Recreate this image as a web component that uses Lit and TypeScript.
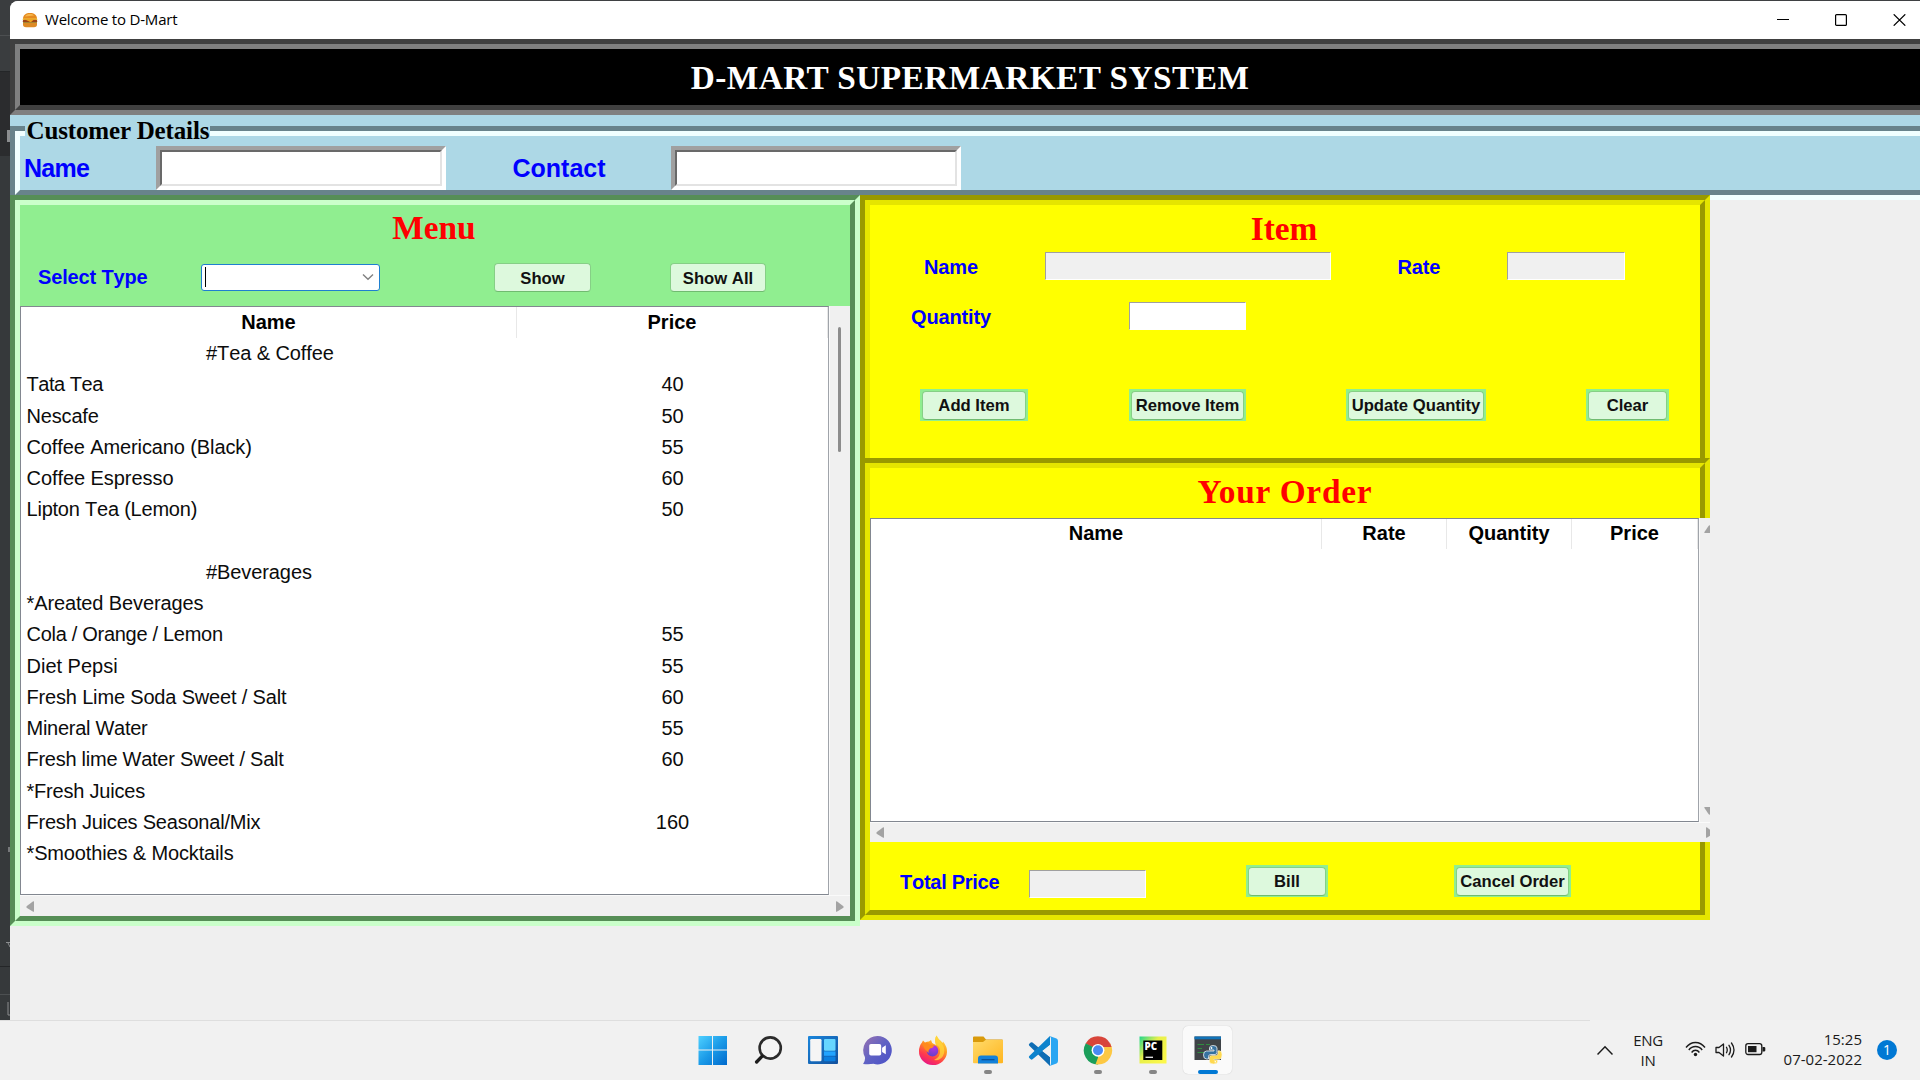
import { LitElement, html, svg, css } from "lit";
import { customElement } from "lit/decorators.js";

type Row = { name: string; price?: string; heading?: boolean; track?: number };

const MENU: Row[] = [
  { name: "#Tea & Coffee", heading: true },
  { name: "Tata Tea", price: "40", track: -0.45 },
  { name: "Nescafe", price: "50", track: -0.17 },
  { name: "Coffee Americano (Black)", price: "55", track: -0.11 },
  { name: "Coffee Espresso", price: "60", track: -0.06 },
  { name: "Lipton Tea (Lemon)", price: "50", track: -0.22 },
  { name: "" },
  { name: "#Beverages", heading: true },
  { name: "*Areated Beverages", track: -0.12 },
  { name: "Cola / Orange / Lemon", price: "55", track: -0.29 },
  { name: "Diet Pepsi", price: "55", track: 0 },
  { name: "Fresh Lime Soda Sweet / Salt", price: "60", track: -0.17 },
  { name: "Mineral Water", price: "55", track: -0.27 },
  { name: "Fresh lime Water Sweet / Salt", price: "60", track: -0.26 },
  { name: "*Fresh Juices", track: -0.2 },
  { name: "Fresh Juices Seasonal/Mix", price: "160", track: -0.21 },
  { name: "*Smoothies & Mocktails", track: -0.14 },
];

const arrow = (dir: "left" | "right" | "up" | "down") => {
  const d = {
    left: "M8 .8V10.2Q8 11 7.2 10.7L1 7Q-.2 6 .9 5L7.2.3Q8 0 8 .8Z",
    right: "M0 .8V10.2Q0 11 .8 10.7L7 7Q8.2 6 7.1 5L.8.3Q0 0 0 .8Z",
    up: "M.8 8H10.2Q11 8 10.7 7.2L6.5.9Q5.5-.2 4.5.9L.3 7.2Q0 8 .8 8Z",
    down: "M.8 0H10.2Q11 0 10.7.8L6.5 7.1Q5.5 8.2 4.5 7.1L.3.8Q0 0 .8 0Z",
  }[dir];
  const flat = dir === "up" || dir === "down";
  return html`<svg class="arrow" width=${flat ? 11 : 8} height=${flat ? 8 : 11}><path d=${d} fill="#a3a3a3" /></svg>`;
};

const burger = html`<svg width="16" height="16" viewBox="0 0 16 16">
  <path d="M1 7C1 2.8 4 1 8 1s7 1.8 7 6z" fill="#e58a1f" />
  <path d="M3 4.5C4 2.4 6 2 8 2s3 .3 4 1.4z" fill="#f7b64c" />
  <rect x=".6" y="6.6" width="14.8" height="1.6" rx=".8" fill="#f5c33b" />
  <rect x=".8" y="7.8" width="14.4" height="3" rx="1.2" fill="#9c4216" />
  <path d="M3 7.6h9l-3.2 2.6z" fill="#f3a51e" /><rect x="1" y="10.2" width="14" height="1" fill="#a08a2c" />
  <path d="M1 11h14v1.5q0 2.8-3 2.8H4q-3 0-3-2.8z" fill="#dd8a25" />
</svg>`;

const icons = {
  windows: svg`<defs><linearGradient id="w" x1="0" y1="0" x2="1" y2="1"><stop offset="0" stop-color="#4fd0ff"/><stop offset=".5" stop-color="#1b9be8"/><stop offset="1" stop-color="#0069cc"/></linearGradient></defs>
    <path fill="url(#w)" d="M1.500 1H15V14.500H1.500zM16 1H30V14.500H16zM1.500 15.500H15V30H1.500zM16 15.500H30V30H16z"/>`,
  search: svg`<circle cx="18.200" cy="13" r="10.600" fill="#f4f4f4" stroke="#2b2b2b" stroke-width="2.600"/><path d="M10.200 21.200 4.600 27" stroke="#1d1d1d" stroke-width="3.300" stroke-linecap="round"/>`,
  widgets: svg`<defs><linearGradient id="wb" x1="0" y1="0" x2="1" y2="1"><stop offset="0" stop-color="#1a86dc"/><stop offset="1" stop-color="#12509c"/></linearGradient></defs>
    <rect x="1" y="1" width="30" height="28" rx="1" fill="url(#wb)"/><rect x="3.200" y="4" width="11.300" height="22.200" rx="1.200" fill="#f5f5f5"/><rect x="17" y="4" width="11.500" height="11.800" rx="1" fill="#67d6ff"/><rect x="17" y="16.400" width="11.500" height="4.400" fill="#22a4ff"/><rect x="17" y="21.400" width="11.500" height="4.800" rx="1" fill="#0b7fe0"/>`,
  chat: svg`<defs><linearGradient id="ch" x1="0" y1="0" x2="1" y2="1"><stop offset="0" stop-color="#9a72b0"/><stop offset=".5" stop-color="#5f62c4"/><stop offset="1" stop-color="#4a50c8"/></linearGradient></defs>
    <path fill="url(#ch)" d="M15.500 1a14.200 14.200 0 1 1-4 27.800Q7.500 29.500 1.100 29 3.500 26 2.900 22A14.200 14.200 0 0 1 15.500 1z"/><rect x="7.200" y="9" width="12" height="11.600" rx="1.800" fill="#fff"/><path d="M20.100 12.800 23.800 10.300v9L20.100 17z" fill="#fff"/>`,
  firefox: svg`<defs><linearGradient id="ff" x1=".8" y1="0" x2=".3" y2="1"><stop offset="0" stop-color="#ffe94a"/><stop offset=".4" stop-color="#ff9a1f"/><stop offset=".75" stop-color="#ff3a4d"/><stop offset="1" stop-color="#e61587"/></linearGradient><radialGradient id="fp" cx=".6" cy=".2" r=".9"><stop offset="0" stop-color="#b833e1"/><stop offset="1" stop-color="#5b42c8"/></radialGradient></defs>
    <path fill="url(#ff)" d="M5 7.500 6 5.500 8 7.500Q10 6.500 12 6.500L14 5Q14.500 8 17 9L19 10Q17 4 19.500.500 21 4 24 6L25.500 8 26 6.500Q30.500 12 30 17A14 13.500 0 0 1 2 16Q2 11 5 7.500z"/><path fill="#ffd83b" d="M19.500.500Q22 5 25.500 9.500 29 15 26 21 23 26 17 25 24 22 23 15 22.500 11 19 10 17 4 19.500.500z" opacity=".75"/><circle cx="15.500" cy="15.700" r="5.800" fill="url(#fp)"/><path fill="#ff8a1e" d="M5 9Q9 7 13 9.500L17.500 10.500Q16 13 13 13.500 11 15 11.500 18 7 14 5 9z"/>`,
  folder: svg`<defs><linearGradient id="fo" x1="0" y1="0" x2="1" y2="1"><stop offset="0" stop-color="#ffdb6b"/><stop offset="1" stop-color="#ffb51f"/></linearGradient></defs>
    <path d="M1 2.500Q1 1.500 2 1.500H11.500L14 4.500H30Q31 4.500 31 5.500V10H1z" fill="#d99a0b"/><path d="M1 7H11L13.500 5H31V27.300Q31 28.300 30 28.300H2Q1 28.300 1 27.300z" fill="url(#fo)"/><path d="M6 28.500V23.500Q6 20.500 9 20.500H23Q26 20.500 26 23.500V28.500z" fill="#1381da"/><path d="M9.500 24.700H22.500" stroke="#0a4f94" stroke-width="1.200"/>`,
  code: svg`<path d="M23 .800V31L2.300 10.800Q1.300 9.800 2.300 8.800L3.700 7.600Q4.600 7 5.500 7.600L23 22z" fill="#0f6db4"/><path d="M23 31V1L2.300 21Q1.300 22 2.300 23L3.700 24.300Q4.600 25 5.500 24.300L23 10z" fill="#0d83cd"/><path d="M22.500 1 29.500 3.500Q31 4.200 31 6V26Q31 27.800 29.500 28.500L22.500 31Q24 30 24 28V3.500Q24 2 22.500 1z" fill="#2aa6f2"/><path d="M23 10V22L15.300 16z" fill="#f1f1f1"/>`,
  chrome: svg`<path d="M16 15.500 3.600 8.500A14 14 0 0 1 28.200 8.500z" fill="#d8453a"/><path d="M16 15.500 28.200 8.500A14 14 0 0 1 16 29.500z" fill="#fdc843"/><path d="M16 15.500 16 29.500A14 14 0 0 1 3.700 8.500z" fill="#1b9e5a"/><path d="M16 8.500H28.200L29.500 12H20z" fill="#d8453a"/><path d="M21.800 18.700 16 29.500 13.500 29.200 17 20z" fill="#fdc843"/><path d="M3.700 8.500 10 19 11 12z" fill="#1b9e5a"/><circle cx="16" cy="15.300" r="6.400" fill="#fff"/><circle cx="16" cy="15.300" r="5" fill="#4a8af4"/>`,
  pycharm: svg`<defs><linearGradient id="pc" x1="0" y1="0" x2="1" y2=".8"><stop offset="0" stop-color="#1fd68d"/><stop offset=".45" stop-color="#e8f04a"/><stop offset="1" stop-color="#fcf84a"/></linearGradient></defs>
    <path fill="url(#pc)" d="M2.500 1.500H29.500V28.500H2.500z"/><rect x="6.300" y="5.500" width="19" height="19.500" fill="#000"/><text x="7.500" y="14.800" font-family="Open Sans, sans-serif" font-weight="800" font-size="9.800" fill="#fff">PC</text><path d="M8.500 22.300H16" stroke="#ddd" stroke-width="1.400"/>`,
  python: svg`<rect x="2.500" y="1.500" width="26.500" height="23.500" fill="#3f4347"/><rect x="2.500" y="1.500" width="26.500" height="2.800" fill="#1273b8"/><path d="M5.500 9.500H12M14 9.500H18M5.500 13.500H10M5.500 17.500H12" stroke="#2f8d3f" stroke-width="1.200"/>
    <path d="M21 10.500Q17.500 10.500 17.500 13V15H22V16H14.500Q11.500 16 11.500 20T14.500 24H16.500V21.500Q16.500 19.500 19 19.500H23Q25 19.500 25 17.500V13Q25 10.500 21 10.500z" fill="#37719f" stroke="#eef3f6" stroke-width=".8"/><path d="M21.500 29Q17.500 29 17.500 26.500V22.500Q17.500 20.500 19.500 20.500H23.500Q26 20.500 26 18V15.800H27.500Q30 15.800 30 19.800T27.500 24.300H22V25H25.500V26.500Q25.500 29 21.500 29z" fill="#ffd94f" stroke="#fbf6e0" stroke-width=".6"/><circle cx="19.500" cy="13" r=".9" fill="#fff"/><circle cx="23.300" cy="26.700" r=".8" fill="#fff"/>`,
};

const TASKS: { icon: keyof typeof icons; state: string }[] = [
  { icon: "windows", state: "" },
  { icon: "search", state: "" },
  { icon: "widgets", state: "" },
  { icon: "chat", state: "" },
  { icon: "firefox", state: "" },
  { icon: "folder", state: "open" },
  { icon: "code", state: "" },
  { icon: "chrome", state: "open" },
  { icon: "pycharm", state: "open" },
  { icon: "python", state: "active" },
];

@customElement("app-root")
export class AppRoot extends LitElement {
  static styles = css`
    :host { display: block; width: 1920px; height: 1080px; overflow: hidden; font-family: "Liberation Sans", Arial, sans-serif; font-kerning: none; color: #000; }
    * { box-sizing: border-box; }
    svg { display: block; }
    .desktop { display: flex; flex-direction: column; width: 1920px; height: 1080px; }
    .upper { display: flex; height: 1020px; background: #3f4143; }
    .behind { width: 10px; flex: none; }
    .window { flex: 1; min-width: 0; margin-top: 1px; background: #efefef; border-top-left-radius: 8px; overflow: hidden; display: flex; flex-direction: column; }

    .titlebar { height: 38px; flex: none; background: #fff; display: flex; align-items: center; padding: 0 14px 0 12px; font: 15px/20px "Open Sans", "Noto Sans", sans-serif; }
    .titlebar .caption { margin: -3px auto 0 7px; letter-spacing: -.2px; }
    .controls { display: flex; gap: 46px; }

    .outer { border: 5px solid; }
    .inner { border: 5px solid; height: 100%; }
    .outer.black { border-color: #404040 #808080 #808080 #404040; }
    .outer.black > .inner { border-color: #808080 #404040 #404040 #808080; background: #000; }
    .outer.blue { border-color: #68838b #f0ffff #f0ffff #68838b; }
    .outer.blue > .inner { border-color: #f0ffff #68838b #68838b #f0ffff; }
    .outer.green { border-color: #568e56 #caffca #caffca #568e56; }
    .outer.green > .inner { border-color: #caffca #568e56 #568e56 #caffca; background: #90ee90; }
    .outer.yellow { border-color: #999900 #e5e500 #e5e500 #999900; }
    .outer.yellow > .inner { border-color: #e5e500 #999900 #999900 #e5e500; background: #ff0; }

    .heading { font: bold 33.33px/46px "Liberation Serif", "Times New Roman", serif; color: #f00; text-align: center; }
    .banner { width: 1920px; height: 76px; flex: none; }
    .banner .heading { color: #fff; line-height: 58px; height: 56px; letter-spacing: .44px; }

    .customer { width: 1920px; height: 85px; flex: none; background: #add8e6; padding-top: 11px; }
    .customer .outer { height: 74px; }
    .customer .inner { display: flex; flex-direction: column; }
    .legend { align-self: flex-start; margin: -16px 0 0 5px; width: 185px; padding-left: 1.5px; height: 22px; background: #add8e6; font: bold 25px/22px "Liberation Serif", "Times New Roman", serif; white-space: nowrap; letter-spacing: -.13px; }
    .fields { display: flex; margin-top: 4px; height: 44px; }
    .blabel { font-weight: bold; font-size: 25px; line-height: 45px; color: #00f; padding-left: 4px; }
    .blabel.a { width: 136px; letter-spacing: -.7px; }
    .blabel.b { width: 225px; padding-left: 66.500px; }
    .sunken { width: 290px; border: 4px solid; border-color: #a0a0a0 #fff #fff #a0a0a0; }
    .sunken i { display: block; height: 100%; background: #fff; border: 2px solid; border-color: #696969 #e3e3e3 #e3e3e3 #696969; }

    .panels { display: flex; margin-top: -5px; align-items: flex-start; }
    .menu { width: 850px; height: 731px; flex: none; }
    .side { width: 850px; flex: none; }
    .item { height: 273px; }
    .order { height: 462px; margin-top: -10px; }
    .label { font-weight: bold; font-size: 20px; line-height: 28px; color: #00f; white-space: nowrap; letter-spacing: -.15px; }

    .menu .heading { height: 45px; padding-right: 2px; }
    .picker { display: grid; grid-template-columns: 164px 179px 112px 101px 75px 100px; padding: 0 0 2px 17px; height: 56px; align-items: center; }
    .picker .label { padding-left: 1px; }
    .picker .btn b { line-height: 29px; }
    .combo { height: 27px; border: 1.5px solid #1f7fd0; border-radius: 3px; background: #fff; display: flex; align-items: center; justify-content: space-between; padding: 0 5px 0 3px; }
    .caret { width: 1px; height: 20px; background: #000; }
    .btn { height: 32px; background: #90ee90; padding: 2px 2px 1px; }
    .btn b { display: block; height: 29px; border: 1px solid #86cf86; border-bottom-color: #70bb70; border-radius: 4px; background: #ddf9dd; color: #111; font-size: 16.67px; line-height: 28px; text-align: center; white-space: nowrap; }
    .c4 { grid-column: 4; } .c6 { grid-column: 6; }

    .view { display: grid; }
    .menu .view { grid-template: 589px 21px / 809px 21px; }
    .tree { background: #fff; border: 1px solid #828790; border-right-color: #a0a4aa; overflow: hidden; }
    .thead { display: grid; font-weight: bold; font-size: 20px; line-height: 31px; height: 31px; text-align: center; }
    .menu .thead, .trow { grid-template-columns: 496px 1fr; }
    .thead span { border-right: 1px solid #e8e8e8; }
    .trow { display: grid; height: 31.250px; line-height: 31.250px; font-size: 20px; color: #0c0c0c; white-space: pre; }
    .trow .n { padding-left: 5.500px; letter-spacing: -.09px; }
    .trow .n.heading-row { padding-left: 185px; }
    .trow .p { text-align: center; }
    .vbar, .hbar { background: #f0f0f0; display: flex; border: 0 solid #fafafa; }
    .vbar { flex-direction: column; border-left-width: 1px; }
    .hbar { grid-column: 1 / -1; align-items: center; justify-content: space-between; border-top-width: 1px; }
    .menu .hbar { padding: 0 6px; }
    .thumb { width: 3px; height: 125px; margin: 21px 0 0 8px; background: #8c8c8c; border-radius: 1.500px; }

    .item .heading { height: 47px; line-height: 48px; padding-right: 2px; }
    .line { display: flex; height: 28px; }
    .line .label { padding-top: 1px; }
    .entry { height: 28px; border: 1px solid; border-color: #a0a0a0 #fff #fff #a0a0a0; background: #f0f0f0; }
    .entry.on { background: #fff; }
    .name-l { width: 175px; padding-left: 54px; } .name-e { width: 286px; }
    .rate-l { width: 176px; padding-left: 66.500px; } .rate-e { width: 118px; }
    .line.qty { margin-top: 22px; }
    .qty-l { width: 259px; padding-left: 41px; } .qty-e { width: 117px; }
    .actions { display: flex; margin-top: 59px; padding-left: 50px; }
    .actions .btn:nth-child(1) { width: 108px; margin-right: 101px; }
    .actions .btn:nth-child(2) { width: 117px; margin-right: 100px; }
    .actions .btn:nth-child(3) { width: 140px; margin-right: 100px; }
    .actions .btn:nth-child(4) { width: 83px; }

    .order .heading { height: 50px; line-height: 48px; letter-spacing: .8px; }
    .order .view { width: 840px; grid-template: 304px 20px / 829px 11px; position: relative; }
    .order .thead { grid-template-columns: 451px 125px 125px 1fr; line-height: 29px; height: 30px; }
    .order .vbar { justify-content: space-between; padding: 7px 0 7px 4px; overflow: hidden; }
    .order .arrow { flex: none; }
    .order .hbar { padding-left: 6px; overflow: hidden; }
    .clip { width: 4px; overflow: hidden; }
    .checkout { display: flex; margin-top: 23px; height: 33px; align-items: flex-start; }
    .checkout .label { width: 159px; padding: 3px 0 0 30px; letter-spacing: -.27px; }
    .checkout .entry { width: 117px; margin-top: 5px; }
    .checkout .btn:nth-child(3) { width: 82px; margin-left: 100px; }
    .checkout .btn:nth-child(4) { width: 117px; margin-left: 126px; }

    .taskbar { height: 60px; background: #f1f1f1; display: flex; align-items: stretch; font: 15px/20px "Open Sans", "Noto Sans", sans-serif; color: #1b1b1b; }
    .strip { width: 1590px; border-top: 1px solid #dedede; padding-left: 685px; display: flex; }
    .task { width: 49px; height: 48px; margin: 5px 3px 0; border-radius: 5px; display: flex; flex-direction: column; align-items: center; padding-top: 9px; }
    .task .mark { width: 8px; height: 4px; border-radius: 2px; background: transparent; margin-top: 3px; }
    .task.open .mark { background: #868686; }
    .task.active { background: #fafafa; box-shadow: 0 0 1px #bbb; }
    .task.active .mark { width: 20px; background: #0078d4; }
    .tray { flex: 1; display: flex; align-items: center; padding-left: 7px; }
    .lang { width: 50px; text-align: center; margin-left: 10px; letter-spacing: -.3px; margin-top: -1px; }
    .status { display: flex; gap: 9px; margin-left: 12px; }
    .clock { width: 96px; text-align: right; letter-spacing: .02px; margin-top: -2px; }
    .badge { width: 20px; height: 20px; border-radius: 50%; background: #0078d4; color: #fff; text-align: center; margin-left: 15px; line-height: 20px; font-size: 14px; }
  `;

  private button(text: string, cls = "") {
    return html`<div class="btn ${cls}"><b>${text}</b></div>`;
  }

  private renderRow(r: Row) {
    return html`<div class="trow">
      <span class="n ${r.heading ? "heading-row" : ""}" style=${r.track === undefined ? "" : `letter-spacing:${r.track}px`}>${r.name}</span><span class="p">${r.price ?? ""}</span>
    </div>`;
  }

  private renderMenu() {
    return html`<div class="outer green menu"><div class="inner">
      <div class="heading">Menu</div>
      <div class="picker">
        <span class="label">Select Type</span>
        <div class="combo"><i class="caret"></i>
          <svg width="12" height="8" viewBox="0 0 12 8"><path d="M1 1.500 6 6.300 11 1.500" fill="none" stroke="#808080" stroke-width="1.400" /></svg></div>
        ${this.button("Show", "c4")} ${this.button("Show All", "c6")}
      </div>
      <div class="view">
        <div class="tree">
          <div class="thead"><span>Name</span><span>Price</span></div>
          ${MENU.map((r) => this.renderRow(r))}
        </div>
        <div class="vbar"><div class="thumb"></div></div>
        <div class="hbar">${arrow("left")}${arrow("right")}</div>
      </div>
    </div></div>`;
  }

  private renderItem() {
    return html`<div class="outer yellow item"><div class="inner">
      <div class="heading">Item</div>
      <div class="line">
        <span class="label name-l">Name</span><div class="entry name-e"></div>
        <span class="label rate-l">Rate</span><div class="entry rate-e"></div>
      </div>
      <div class="line qty"><span class="label qty-l">Quantity</span><div class="entry on qty-e"></div></div>
      <div class="actions">${["Add Item", "Remove Item", "Update Quantity", "Clear"].map((t) => this.button(t))}</div>
    </div></div>`;
  }

  private renderOrder() {
    return html`<div class="outer yellow order"><div class="inner">
      <div class="heading">Your Order</div>
      <div class="view">
        <div class="tree"><div class="thead"><span>Name</span><span>Rate</span><span>Quantity</span><span>Price</span></div></div>
        <div class="vbar">${arrow("up")}${arrow("down")}</div>
        <div class="hbar">${arrow("left")}<div class="clip">${arrow("right")}</div></div>
      </div>
      <div class="checkout">
        <span class="label">Total Price</span><div class="entry"></div>
        ${this.button("Bill")}${this.button("Cancel Order")}
      </div>
    </div></div>`;
  }

  private renderTaskbar() {
    return html`<div class="taskbar">
      <div class="strip">
        ${TASKS.map((t) => html`<div class="task ${t.state}"><svg width="32" height="32" viewBox="0 0 32 32">${icons[t.icon]}</svg><i class="mark"></i></div>`)}
      </div>
      <div class="tray">
        <svg width="16" height="11" viewBox="0 0 16 11"><path d="M.500 9.500 8 1.800 15.500 9.500" fill="none" stroke="#1b1b1b" stroke-width="1.500" /></svg>
        <div class="lang">ENG<br />IN</div>
        <div class="status">
          <svg width="21" height="16" viewBox="0 0 21 16" fill="none" stroke="#1b1b1b" stroke-width="1.400"><path d="M1 6.500Q5 1.500 10.500 1.500T20 6.500M3.800 9Q6.500 5.500 10.500 5.500T17.200 9M6.600 11.500Q8.200 9.300 10.500 9.300T14.400 11.500" /><circle cx="10.500" cy="13.500" r="1.700" fill="#1b1b1b" stroke="none" /></svg>
          <svg width="21" height="18" viewBox="0 0 21 18" fill="none" stroke="#1b1b1b" stroke-width="1.300" stroke-linejoin="round" stroke-linecap="round"><path d="M1 6.500V11.500H4L8.500 15V3L4 6.500zM11.500 6.300Q13 9 11.500 11.700M14 4.300Q17 9 14 13.700M16.500 2Q21.500 9 16.500 16" /></svg>
          <svg width="21" height="16" viewBox="0 0 21 16"><rect x=".8" y="2.700" width="16" height="10.800" rx="2.200" fill="none" stroke="#1b1b1b" stroke-width="1.300" /><rect x="3" y="5" width="8.500" height="6.200" fill="#1b1b1b" /><path d="M17.500 6H19Q20.300 6 20.300 7V9.500Q20.300 10.500 19 10.500H17.500z" fill="#1b1b1b" /></svg>
        </div>
        <div class="clock">15:25<br />07-02-2022</div>
        <div class="badge">1</div>
      </div>
    </div>`;
  }

  render() {
    return html`<div class="desktop">
      <div class="upper">
        <svg class="behind" width="10" height="1020"><rect width="10" height="1020" fill="#36393b" /><rect width="10" height="71" fill="#3a3d3f" /><rect y="71" width="10" height="85" fill="#2b2c2e" /><path d="M0 35.500H10M0 994.500H10" stroke="#4c4f51" /><path d="M0 71.500H10M0 966.500H10" stroke="#242628" /><rect x="7" y="130" width="3" height="12" fill="#8b8d8f" /><rect x="8" y="847" width="2" height="5" fill="#77797b" /><path d="M6 942.500H10M8 943 10 947" stroke="#8b8d8f" /><path d="M8 1002V1015H10" fill="none" stroke="#8b8d8f" /></svg>
        <div class="window">
          <div class="titlebar">${burger}<span class="caption">Welcome to D-Mart</span>
            <div class="controls">
              <svg width="12" height="12"><path d="M0 5.500H12" stroke="#000" /></svg>
              <svg width="12" height="12"><rect x=".6" y=".6" width="10.800" height="10.800" rx="1" fill="none" stroke="#000" stroke-width="1.200" /></svg>
              <svg width="13" height="12" viewBox="0 0 13 12"><path d="M.700.300 12.300 11.700M12.300.300.700 11.700" stroke="#000" stroke-width="1.200" /></svg>
            </div>
          </div>
          <div class="outer black banner"><div class="inner"><div class="heading">D-MART SUPERMARKET SYSTEM</div></div></div>
          <div class="customer"><div class="outer blue"><div class="inner">
            <div class="legend">Customer Details</div>
            <div class="fields">
              <span class="blabel a">Name</span><div class="sunken"><i></i></div>
              <span class="blabel b">Contact</span><div class="sunken"><i></i></div>
            </div>
          </div></div></div>
          <div class="panels">
            ${this.renderMenu()}
            <div class="side">${this.renderItem()}${this.renderOrder()}</div>
          </div>
        </div>
      </div>
      ${this.renderTaskbar()}
    </div>`;
  }
}
